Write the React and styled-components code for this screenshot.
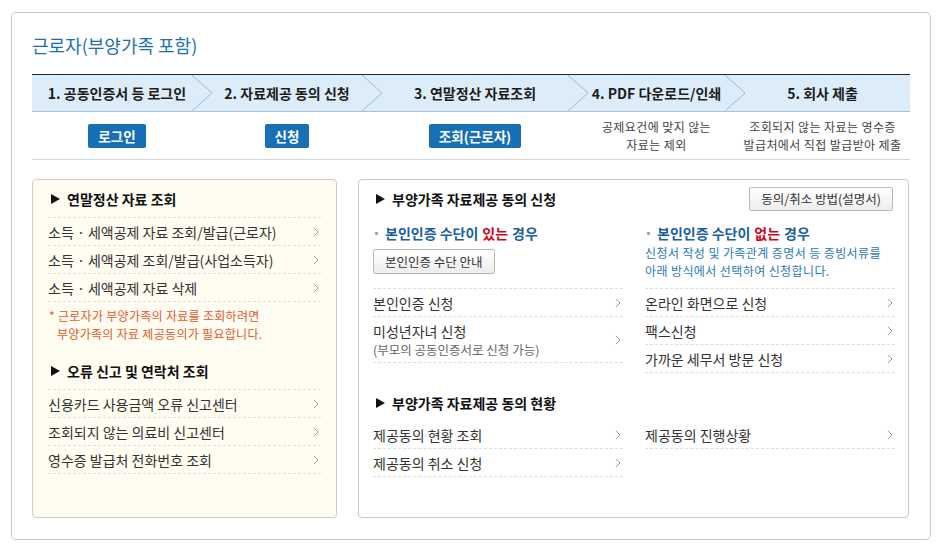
import React from 'react';
import styled, { createGlobalStyle } from 'styled-components';

const GlobalStyle = createGlobalStyle`
  html, body { margin: 0; padding: 0; background: #fff; }
  body { font-family: "Noto Sans CJK KR", "Noto Sans", sans-serif; color: #333; }
  *, *::before, *::after { box-sizing: border-box; }
`;

const Frame = styled.div`
  margin: 12px 0 0 11px;
  width: 920px;
  border: 1px solid #c9c9c9;
  border-radius: 5px;
  padding: 20px 20px 21px;
`;

const Title = styled.h2`
  margin: 0;
  font-size: 18px;
  line-height: 24px;
  font-weight: 400;
  color: #1e6fb0;
`;

const COLS = '170px 170px 206px 157px 175px';

const Steps = styled.ol`
  list-style: none;
  margin: 17px 0 0;
  padding: 0;
  display: grid;
  grid-template-columns: ${COLS};
  height: 38px;
  background: #dcedf9;
  border-top: 1px solid #1c2834;
  border-bottom: 1px solid #a9c2d6;
`;

const Step = styled.li`
  position: relative;
  display: flex;
  align-items: center;
  justify-content: center;
  font-size: 14px;
  font-weight: 700;
  color: #1d1d1d;
`;

const ChevronSvg = styled.svg`
  position: absolute;
  right: -11px;
  top: 0;
  width: 22px;
  height: 36px;
`;

const Actions = styled.div`
  display: grid;
  grid-template-columns: ${COLS};
  height: 48px;
  border-bottom: 1px solid #d6d6d6;
`;

const ActionCell = styled.div`
  display: flex;
  align-items: center;
  justify-content: center;
`;

const BlueButton = styled.button`
  height: 24px;
  padding: 0 10px;
  border: 0;
  border-radius: 2px;
  background: #1770b5;
  color: #fff;
  font-family: inherit;
  font-size: 13.5px;
  font-weight: 700;
  cursor: pointer;
`;

const Desc = styled.p`
  margin: 0;
  font-size: 12px;
  letter-spacing: 0.4px;
  line-height: 17.5px;
  color: #444;
  text-align: center;
`;

const Panels = styled.div`
  display: grid;
  grid-template-columns: 305px 551px;
  gap: 21px;
  margin-top: 19px;
  height: 339px;
`;

const CreamPanel = styled.section`
  background: #fffdf1;
  border: 1px solid #cdcdcd;
  border-radius: 4px;
  padding: 0 15px;
`;

const WhitePanel = styled.section`
  background: #fff;
  border: 1px solid #c9c9c9;
  border-radius: 4px;
  padding: 0 13px 0 14px;
`;

const SectionTitle = styled.h3`
  margin: ${p => p.$mt || 0}px 0 0;
  display: flex;
  align-items: center;
  height: ${p => p.$h || 37}px;
  padding-left: 3px;
  font-size: 14px;
  font-weight: 700;
  color: #111;
  &::before {
    content: '';
    width: 0;
    height: 0;
    border-left: 9px solid #111;
    border-top: 5px solid transparent;
    border-bottom: 5px solid transparent;
    margin-right: 7px;
  }
`;

const List = styled.ul`
  list-style: none;
  margin: 0;
  padding: 0;
  border-top: ${p => (p.$noTop ? '0' : '1px dashed #dedede')};
`;

const Item = styled.li`
  display: flex;
  align-items: center;
  justify-content: space-between;
  min-height: 28px;
  padding: ${p => (p.$tall ? '4px 0 3px' : '0')};
  border-bottom: 1px dashed #dedede;
  font-size: 14px;
  color: #333;
  cursor: pointer;
`;

const ItemText = styled.span`
  display: flex;
  flex-direction: column;
  line-height: 20px;
`;

const SubText = styled.span`
  font-size: 12.5px;
  line-height: 18px;
  color: #666;
`;

const Arrow = styled.svg`
  width: 6px;
  height: 10px;
  margin-right: 2px;
  flex: none;
`;

const Note = styled.p`
  margin: 5px 0 0;
  padding-left: 9px;
  text-indent: -8px;
  font-size: 12px;
  letter-spacing: 0.3px;
  line-height: 17.5px;
  color: #e4582b;
`;

const HeaderRow = styled.div`
  display: flex;
  align-items: center;
  justify-content: space-between;
  height: 37px;
`;

const GrayButton = styled.button`
  height: ${p => p.$h || 24}px;
  padding: 0 11px;
  margin-right: ${p => p.$mr || 0}px;
  border: 1px solid #b8b8b8;
  border-radius: 2px;
  background: linear-gradient(#ffffff, #ededed);
  color: #333;
  font-family: inherit;
  font-size: 12.5px;
  cursor: pointer;
`;

const Columns = styled.div`
  display: grid;
  grid-template-columns: 250px 250px;
  gap: 22px;
  margin-top: ${p => p.$mt || 0}px;
`;

const Column = styled.div`
  display: grid;
  grid-template-rows: 20px 45px auto;
`;

const CaseHeading = styled.h4`
  margin: 0;
  display: flex;
  align-items: center;
  padding-left: 2px;
  font-size: 14px;
  font-weight: 700;
  line-height: 20px;
  color: #1b5f9e;
  &::before {
    content: '';
    width: 3px;
    height: 3px;
    background: #a8a8a8;
    margin-right: 7px;
  }
`;

const Red = styled.span`
  color: #d0021b;
  margin: 0 4px;
`;

const CaseBody = styled.div`
  padding-top: ${p => p.$pt || 0}px;
`;

const BlueText = styled.p`
  margin: 0;
  font-size: 12px;
  letter-spacing: 0.4px;
  line-height: 17.5px;
  color: #2b78b8;
`;

const Chevron = () => (
  <ChevronSvg viewBox="0 0 22 36" preserveAspectRatio="none">
    <polyline points="1,0 21,18 1,36" fill="none" stroke="#9fbacd" strokeWidth="1" />
  </ChevronSvg>
);

const ArrowIcon = () => (
  <Arrow viewBox="0 0 6 10">
    <polyline points="0.8,0.8 5,5 0.8,9.2" fill="none" stroke="#9a9a9a" strokeWidth="1" />
  </Arrow>
);

const Row = ({ children, sub, tall }) => (
  <Item $tall={tall}>
    <ItemText>
      {children}
      {sub && <SubText>{sub}</SubText>}
    </ItemText>
    <ArrowIcon />
  </Item>
);

const steps = [
  '1. 공동인증서 등 로그인',
  '2. 자료제공 동의 신청',
  '3. 연말정산 자료조회',
  '4. PDF 다운로드/인쇄',
  '5. 회사 제출',
];

export default function App() {
  return (
    <>
      <GlobalStyle />
      <Frame>
        <Title>근로자(부양가족 포함)</Title>
        <Steps>
          {steps.map((s, i) => (
            <Step key={s}>
              {s}
              {i < steps.length - 1 && <Chevron />}
            </Step>
          ))}
        </Steps>
        <Actions>
          <ActionCell><BlueButton>로그인</BlueButton></ActionCell>
          <ActionCell><BlueButton>신청</BlueButton></ActionCell>
          <ActionCell><BlueButton>조회(근로자)</BlueButton></ActionCell>
          <ActionCell>
            <Desc>공제요건에 맞지 않는<br />자료는 제외</Desc>
          </ActionCell>
          <ActionCell>
            <Desc>조회되지 않는 자료는 영수증<br />발급처에서 직접 발급받아 제출</Desc>
          </ActionCell>
        </Actions>
        <Panels>
          <CreamPanel>
            <SectionTitle>연말정산 자료 조회</SectionTitle>
            <List>
              <Row>소득 · 세액공제 자료 조회/발급(근로자)</Row>
              <Row>소득 · 세액공제 조회/발급(사업소득자)</Row>
              <Row>소득 · 세액공제 자료 삭제</Row>
            </List>
            <Note>
              * 근로자가 부양가족의 자료를 조회하려면<br />부양가족의 자료 제공동의가 필요합니다.
            </Note>
            <SectionTitle $mt={10}>오류 신고 및 연락처 조회</SectionTitle>
            <List>
              <Row>신용카드 사용금액 오류 신고센터</Row>
              <Row>조회되지 않는 의료비 신고센터</Row>
              <Row>영수증 발급처 전화번호 조회</Row>
            </List>
          </CreamPanel>
          <WhitePanel>
            <HeaderRow>
              <SectionTitle>부양가족 자료제공 동의 신청</SectionTitle>
              <GrayButton $mr={2}>동의/취소 방법(설명서)</GrayButton>
            </HeaderRow>
            <Columns $mt={6}>
              <Column>
                <CaseHeading>본인인증 수단이<Red>있는</Red>경우</CaseHeading>
                <CaseBody $pt={5}>
                  <GrayButton $h={25}>본인인증 수단 안내</GrayButton>
                </CaseBody>
                <List>
                  <Row>본인인증 신청</Row>
                  <Row tall sub="(부모의 공동인증서로 신청 가능)">미성년자녀 신청</Row>
                </List>
              </Column>
              <Column>
                <CaseHeading>본인인증 수단이<Red>없는</Red>경우</CaseHeading>
                <CaseBody $pt={1}>
                  <BlueText>
                    신청서 작성 및 가족관계 증명서 등 증빙서류를<br />아래 방식에서 선택하여 신청합니다.
                  </BlueText>
                </CaseBody>
                <List>
                  <Row>온라인 화면으로 신청</Row>
                  <Row>팩스신청</Row>
                  <Row>가까운 세무서 방문 신청</Row>
                </List>
              </Column>
            </Columns>
            <SectionTitle $mt={20} $h={20}>부양가족 자료제공 동의 현황</SectionTitle>
            <Columns $mt={8}>
              <List $noTop>
                <Row>제공동의 현황 조회</Row>
                <Row>제공동의 취소 신청</Row>
              </List>
              <List $noTop>
                <Row>제공동의 진행상황</Row>
              </List>
            </Columns>
          </WhitePanel>
        </Panels>
      </Frame>
    </>
  );
}
